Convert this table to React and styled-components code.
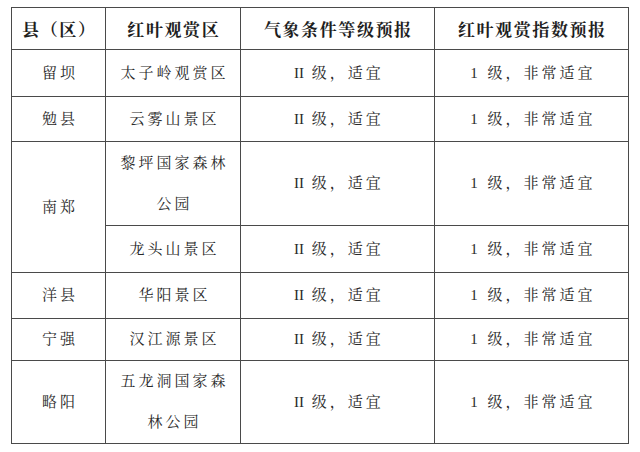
import React from "react";
import styled, { createGlobalStyle } from "styled-components";

const Global = createGlobalStyle`
  html, body { margin: 0; padding: 0; background: #fff; }
  body {
    font-family: "Liberation Serif", "Noto Serif CJK SC", "Noto Sans CJK SC", serif;
    color: #222;
  }
`;

const Page = styled.div`
  width: 640px;
  height: 452px;
  padding: 7px 0 0 11px;
  box-sizing: border-box;
  background: #fff;
`;

const Table = styled.table`
  border-collapse: collapse;
  table-layout: fixed;
  width: 618px;
  border: 1px solid #4a4a4a;
`;

const Head = styled.th`
  border: 1px solid #4a4a4a;
  font-size: 17px;
  font-weight: 700;
  letter-spacing: 1.6px;
  padding: 0 0 0 1.6px;
  text-align: center;
  vertical-align: middle;
  color: #1e1e1e;
`;

const Cell = styled.td`
  border: 1px solid #4a4a4a;
  font-size: 15px;
  font-weight: 400;
  letter-spacing: 3px;
  line-height: 41px;
  padding: 0 0 0 3px;
  text-align: center;
  vertical-align: middle;
  color: #2a2a2a;
  white-space: nowrap;
`;

const Numeral = styled.span`
  letter-spacing: 0;
  margin-right: 1px;
`;

const Row = styled.tr`
  height: ${(p) => p.$h}px;
`;

const rows = [
  { h: 47, county: "留坝", span: 1, spot: ["太子岭观赏区"] },
  { h: 45, county: "勉县", span: 1, spot: ["云雾山景区"] },
  { h: 84, county: "南郑", span: 2, spot: ["黎坪国家森林", "公园"] },
  { h: 47, spot: ["龙头山景区"] },
  { h: 46, county: "洋县", span: 1, spot: ["华阳景区"] },
  { h: 42, county: "宁强", span: 1, spot: ["汉江源景区"] },
  { h: 83, county: "略阳", span: 1, spot: ["五龙洞国家森", "林公园"] },
];

export default function App() {
  return (
    <>
      <Global />
      <Page>
        <Table>
          <colgroup>
            <col style={{ width: 94 }} />
            <col style={{ width: 135 }} />
            <col style={{ width: 194 }} />
            <col style={{ width: 194 }} />
          </colgroup>
          <thead>
            <Row $h={42}>
              <Head>县（区）</Head>
              <Head>红叶观赏区</Head>
              <Head>气象条件等级预报</Head>
              <Head>红叶观赏指数预报</Head>
            </Row>
          </thead>
          <tbody>
            {rows.map((r, i) => (
              <Row key={i} $h={r.h}>
                {r.county && <Cell rowSpan={r.span}>{r.county}</Cell>}
                <Cell>
                  {r.spot.map((s, j) => (
                    <React.Fragment key={j}>
                      {j > 0 && <br />}
                      {s}
                    </React.Fragment>
                  ))}
                </Cell>
                <Cell>
                  <Numeral>II</Numeral> 级，适宜
                </Cell>
                <Cell>1 级，非常适宜</Cell>
              </Row>
            ))}
          </tbody>
        </Table>
      </Page>
    </>
  );
}
